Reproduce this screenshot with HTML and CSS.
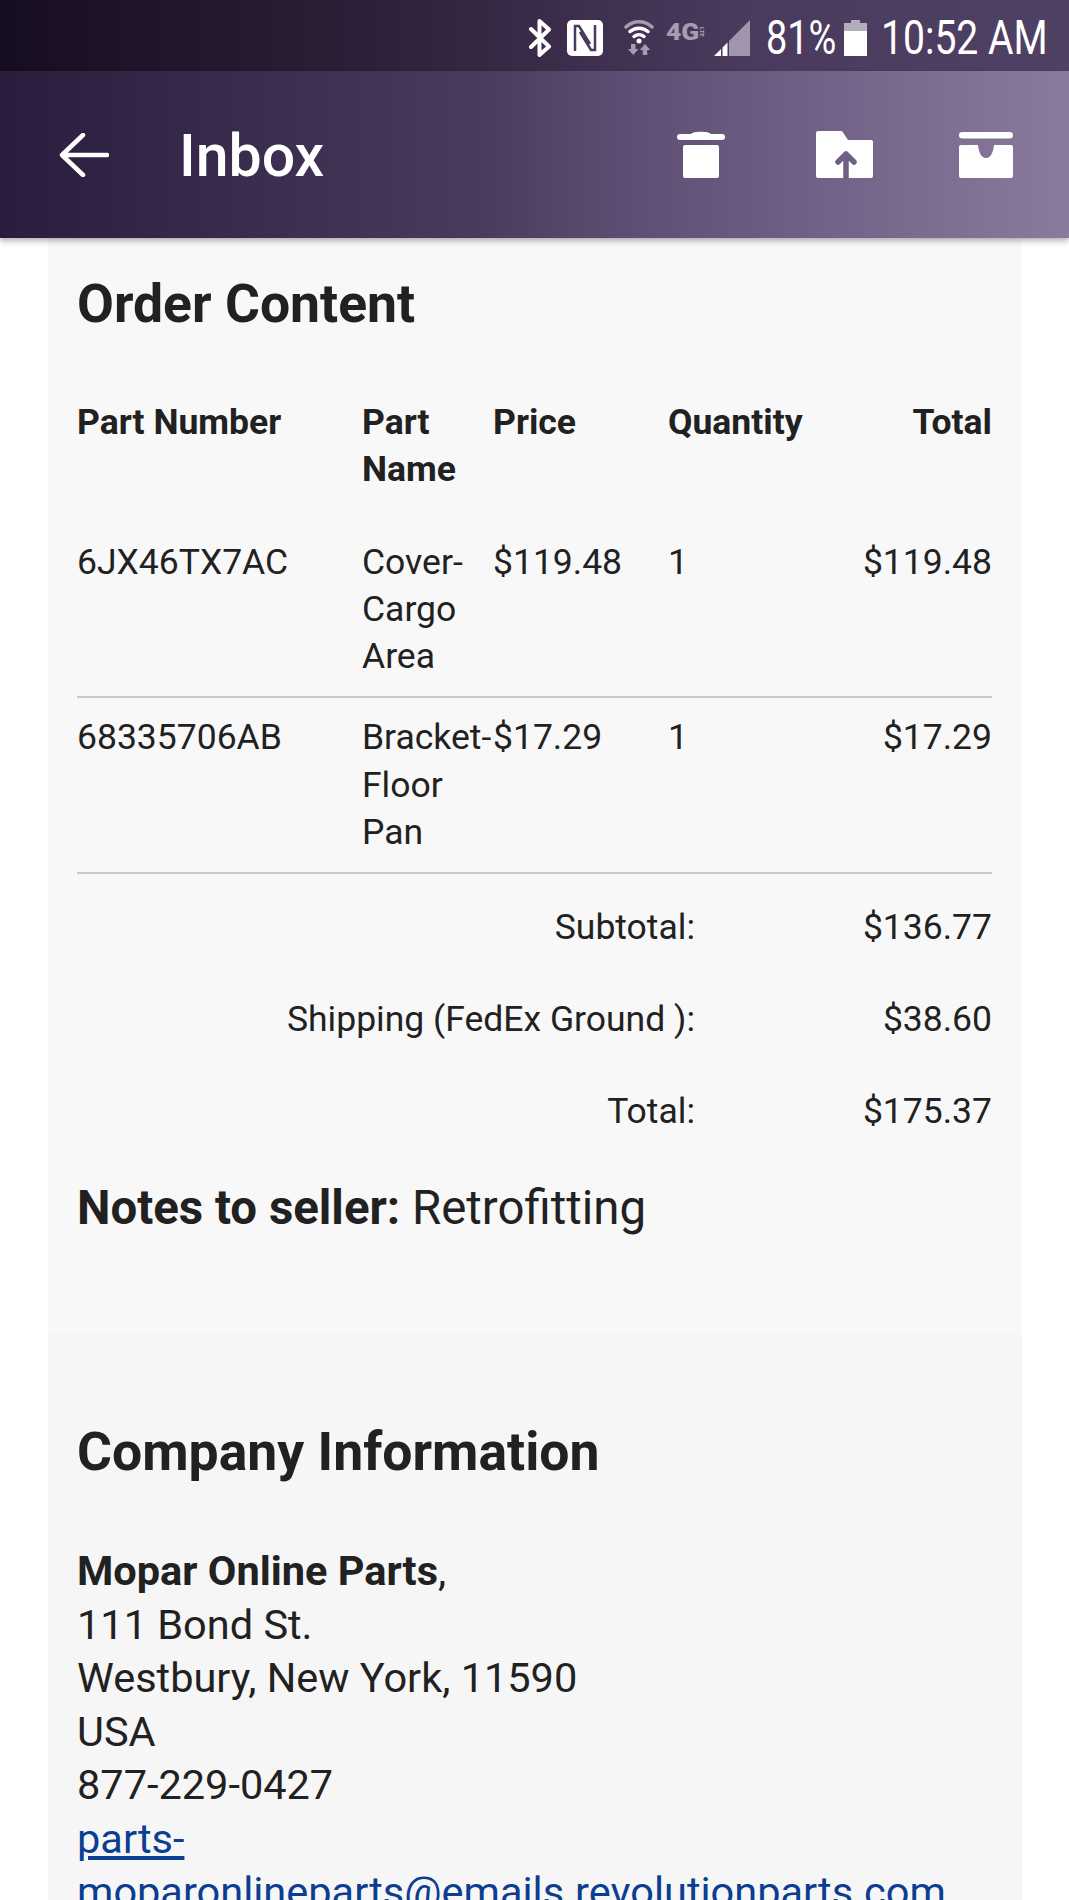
FILE: index.html
```html
<!DOCTYPE html>
<html lang="en">
<head>
  <meta charset="UTF-8" />
  <meta name="viewport" content="width=device-width, initial-scale=1" />
  <title>Inbox</title>
  <link rel="stylesheet" href="styles.css">
</head>
<body>

  <div class="status-bar">
    <svg class="ic-bt" width="24" height="38" viewBox="0 0 24 38"><path d="M3 10 L21 27.500 L11.500 36 V2 L21 10.500 L3 28" fill="none" stroke="#fff" stroke-width="4" stroke-linecap="round" stroke-linejoin="round"/></svg>
    <svg class="ic-nfc" width="36" height="36" viewBox="0 0 36 36"><rect width="36" height="36" rx="5" fill="#fff"/><path d="M8 31 V6 H12 L23 24 M28 5 V30 H24 L13 12" fill="none" stroke="#4a3b5e" stroke-width="2.500"/></svg>
    <svg class="ic-wifi" width="30" height="35" viewBox="0 0 30 35"><path d="M2 7 C9 0 21 0 28 7" fill="none" stroke="#a59cb0" stroke-width="3.500" stroke-linecap="round"/><path d="M6 11.500 C11 7 19 7 24 11.500 M10 16.500 C13 14 17 14 20 16.500" fill="none" stroke="#fff" stroke-width="3.500" stroke-linecap="round"/><circle cx="15" cy="21" r="2.500" fill="#fff"/><path d="M7 24 h4.500 v5 h3 l-5.250 6 l-5.250 -6 h3 z M21 24 l5.250 6 h-3 v5 h-4.500 v-5 h-3 z" fill="#a59cb0"/></svg>
    <span class="ic-lte"><span class="lte-big">4G</span><small>LTE</small></span>
    <svg class="ic-signal" width="36" height="36" viewBox="0 0 36 36"><path d="M36 0 V36 H15 V21 Z" fill="#9f95ad"/><path d="M0 36 L7 29 V36 Z M8.500 27.500 L13.500 22.500 V36 H8.500 Z" fill="#fff"/></svg>
    <span class="status-text batt-pct">81%</span>
    <svg class="ic-batt" width="23" height="36" viewBox="0 0 23 36"><path d="M7 0 h9 v3 h7 v9 H0 V3 h7 z" fill="#b4adbc"/><rect y="11" width="23" height="25" fill="#fff"/></svg>
    <span class="status-text clock">10:52 AM</span>
  </div>

  <header class="app-bar">
    <svg class="back" width="50" height="44" viewBox="0 0 50 44"><path d="M3 22 H48 M24 2 L3 22 L24 42" fill="none" stroke="#fff" stroke-width="4.500" stroke-linecap="round" stroke-linejoin="round"/></svg>
    <h1>Inbox</h1>
    <div class="actions">
      <svg class="act-trash" width="48" height="47" viewBox="0 0 48 47"><path d="M14 3 C16 0 32 0 34 3 H45 A3 3 0 0 1 45 9 H3 A3 3 0 0 1 3 3 Z" fill="#fff"/><rect x="6" y="14" width="36" height="33" rx="2" fill="#fff"/></svg>
      <svg class="act-folder" width="57" height="47" viewBox="0 0 57 47"><path d="M2 0 H26 L32 9 H55 A2 2 0 0 1 57 11 V45 A2 2 0 0 1 55 47 H2 A2 2 0 0 1 0 45 V2 A2 2 0 0 1 2 0 Z" fill="#fff"/><path d="M30 47 V23 M22 31 L30 23 L38 31" fill="none" stroke="#6f5f84" stroke-width="5.500" stroke-linecap="round" stroke-linejoin="round"/></svg>
      <svg width="54" height="46" viewBox="0 0 54 46"><rect x="0" y="0" width="54" height="6.500" rx="3.200" fill="#fff"/><path d="M2 13 H19 C20 22 23 26 27 26 C31 26 34 22 35 13 H52 A2 2 0 0 1 54 15 V44 A2 2 0 0 1 52 46 H2 A2 2 0 0 1 0 44 V15 A2 2 0 0 1 2 13 Z" fill="#fff"/></svg>
    </div>
  </header>

  <main>
    <section class="card order">
      <h2>Order Content</h2>
      <table class="items">
        <thead>
          <tr>
            <th>Part Number</th>
            <th>Part Name</th>
            <th>Price</th>
            <th>Quantity</th>
            <th class="right">Total</th>
          </tr>
        </thead>
        <tbody>
          <tr>
            <td>6JX46TX7AC</td>
            <td>Cover-Cargo Area</td>
            <td>$119.48</td>
            <td>1</td>
            <td class="right">$119.48</td>
          </tr>
          <tr>
            <td>68335706AB</td>
            <td>Bracket-Floor Pan</td>
            <td>$17.29</td>
            <td>1</td>
            <td class="right">$17.29</td>
          </tr>
        </tbody>
      </table>

      <div class="totals">
        <div>Subtotal:</div><div>$136.77</div>
        <div>Shipping (FedEx Ground ):</div><div>$38.60</div>
        <div>Total:</div><div>$175.37</div>
      </div>

      <p class="notes"><b>Notes to seller:</b> Retrofitting</p>
    </section>

    <section class="card company">
      <h2>Company Information</h2>
      <p class="address">
        <b>Mopar Online Parts</b>,<br>
        111 Bond St.<br>
        Westbury, New York, 11590<br>
        USA<br>
        877-229-0427<br>
        <a href="#">parts-moparonlineparts@emails.revolutionparts.com</a>
      </p>
    </section>
  </main>

</body>
</html>
```

FILE: styles.css
```css
html, body {
  height: 1900px;
  overflow: hidden;
}

body {
  margin: 0;
  background: #fff;
  color: #212121;
  font-family: Roboto, "Liberation Sans", sans-serif;
}

.status-bar {
  box-sizing: border-box;
  height: 71px;
  padding: 4px 23px 0 0;
  display: flex;
  align-items: center;
  justify-content: flex-end;
  background: linear-gradient(to right, #170d20, #2d2038 35%, #4a3b5e 70%, #4f4164);
}

.status-bar > svg,
.status-bar > span {
  flex: none;
}

.ic-bt { margin-right: 15px; }
.ic-nfc { margin-right: 21px; }
.ic-wifi { margin-right: 12px; }

.ic-lte {
  display: flex;
  align-items: center;
  width: 40px;
  margin-right: 8px;
  margin-bottom: 12px;
  color: #a59cb0;
  font-size: 24px;
  font-weight: 900;
  line-height: 18px;
  white-space: nowrap;
}

.lte-big {
  display: inline-block;
  width: 33px;
  transform: scaleX(1.1);
  transform-origin: left center;
}

.ic-lte small {
  font-size: 6px;
  line-height: 6px;
  writing-mode: vertical-rl;
}

.ic-signal { margin-right: 16px; }

.status-text {
  color: #fff;
  font-size: 48px;
  line-height: 48px;
  white-space: nowrap;
  transform: scaleX(0.79);
  transform-origin: left center;
}

.batt-pct {
  width: 68px;
  margin-right: 10px;
}

.clock {
  width: 165px;
  transform: scaleX(0.814);
}

.ic-batt { margin-right: 14px; }

.app-bar {
  position: relative;
  z-index: 2;
  height: 167px;
  display: flex;
  align-items: center;
  padding-left: 59px;
  background: linear-gradient(to right, #2a1c3c, #4a3b5e 45%, #5f4f74 60%, #75658a 80%, #8a7a9c);
  box-shadow: 0 3px 6px rgba(0, 0, 0, 0.3);
}

.app-bar h1 {
  margin: 3px 0 0 70px;
  color: #fff;
  font-size: 59px;
  font-weight: 500;
  line-height: 70px;
}

.actions {
  margin-left: auto;
  margin-right: 56px;
  display: flex;
  align-items: flex-end;
}

.act-trash { margin-right: 91px; }
.act-folder { margin-right: 86px; }

main {
  margin: 0 47px 0 48px;
}

.card {
  padding: 0 30px 0 29px;
}

.order {
  background: #f8f8f8;
  height: 1095px;
}

.company {
  background: #f6f6f6;
  padding-top: 89px;
  height: 600px;
}

h2 {
  margin: 0;
  font-size: 53.500px;
  font-weight: 700;
  line-height: 60px;
}

.order h2 {
  padding-top: 36px;
  margin-bottom: 65px;
}

.items {
  width: 100%;
  border-collapse: collapse;
  table-layout: fixed;
  font-size: 35.500px;
  line-height: 47.300px;
}

.items th,
.items td {
  padding: 0;
  text-align: left;
  vertical-align: top;
}

.items th { padding-bottom: 45px; }
.items td { padding: 16px 0 16px; }
.items thead + tbody tr:first-child td { padding-top: 0; }
.items tbody tr { border-bottom: 2px solid #c8c8c8; }

.items th:nth-child(1) { width: 285px; }
.items th:nth-child(2) { width: 131px; }
.items th:nth-child(3) { width: 175px; }

.items .right { text-align: right; }

.totals {
  display: grid;
  grid-template-columns: 618px 1fr;
  row-gap: 45px;
  margin-top: 30px;
  font-size: 35.500px;
  line-height: 47px;
  text-align: right;
}

.notes {
  margin: 43px 0 0;
  font-size: 47.400px;
  line-height: 60px;
}

.address {
  margin: 62px 0 0;
  font-size: 41.500px;
  line-height: 53.500px;
}

.address a {
  color: #0b3d91;
}
```
